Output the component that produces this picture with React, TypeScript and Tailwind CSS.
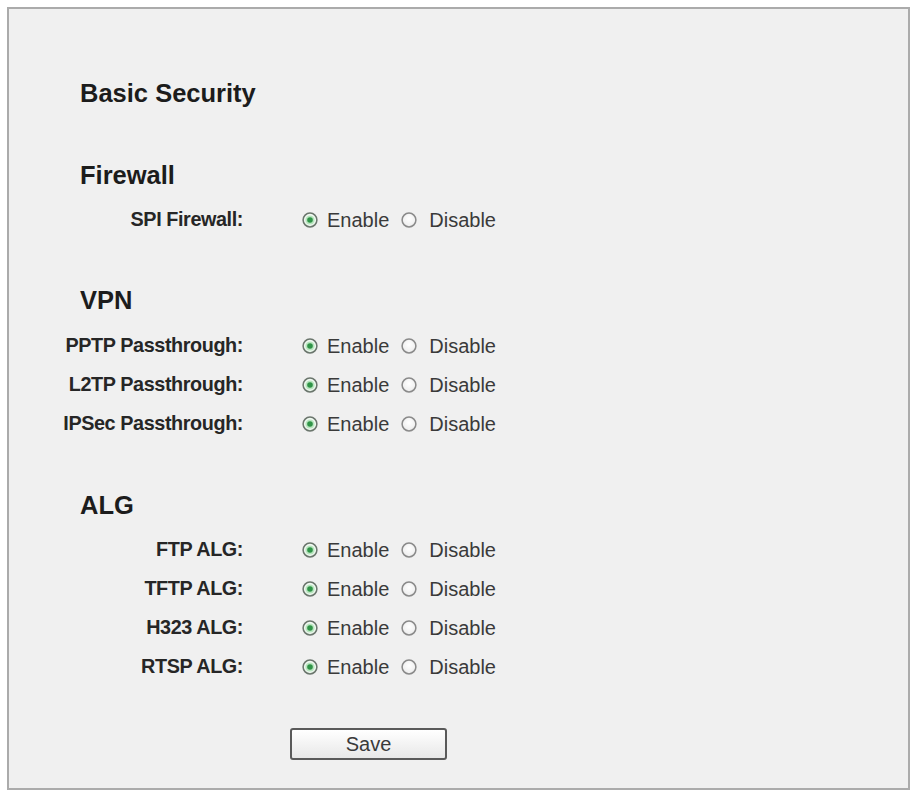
import React from "react";

const font = { fontFamily: '"Liberation Sans", Arial, sans-serif' };

function Radio({ checked }: { checked: boolean }) {
  return (
    <svg width="16" height="16" viewBox="0 0 16 16" className="shrink-0">
      <defs>
        <radialGradient id={checked ? "rg1" : "rg0"} cx="50%" cy="40%" r="60%">
          <stop offset="0%" stopColor="#ffffff" />
          <stop offset="100%" stopColor={checked ? "#e4f3e6" : "#ececec"} />
        </radialGradient>
      </defs>
      <circle cx="8" cy="8" r="6.9" fill={`url(#${checked ? "rg1" : "rg0"})`} stroke={checked ? "#6a756c" : "#8a8a8a"} strokeWidth="1.5" />
      {checked && (
        <>
          <circle cx="8" cy="8" r="4.6" fill="#b9e5bf" />
          <circle cx="8" cy="8" r="2.8" fill="#2f9447" />
        </>
      )}
    </svg>
  );
}

function Row({ label }: { label: string }) {
  return (
    <div className="flex h-[39px] items-center">
      <div className="w-[234px] text-right text-[19.8px] font-bold tracking-[-0.4px] text-[#262626]">{label}</div>
      <div className="ml-[59px] flex items-center text-[20px] text-[#3a3a3a]">
        <Radio checked />
        <span className="ml-[9px]">Enable</span>
        <span className="ml-[12px] flex items-center">
          <Radio checked={false} />
        </span>
        <span className="ml-[12px]">Disable</span>
      </div>
    </div>
  );
}

function Heading({ children, mt }: { children: React.ReactNode; mt: string }) {
  return (
    <div className={`flex h-[40px] items-center pl-[71px] text-[25.5px] font-bold text-[#1c1c1c] ${mt}`}>
      {children}
    </div>
  );
}

export default function App() {
  return (
    <div className="min-h-[792px] w-[915px] bg-white pl-[7px] pt-[7px]" style={font}>
      <div className="flex h-[783px] w-[903px] flex-col border-2 border-[#ababab] bg-[#f0f0f0]">
        <Heading mt="mt-[64px]">Basic Security</Heading>
        <Heading mt="mt-[42px]">Firewall</Heading>
        <div className="mt-[5px]">
          <Row label="SPI Firewall:" />
        </div>
        <Heading mt="mt-[41px]">VPN</Heading>
        <div className="mt-[6px]">
          <Row label="PPTP Passthrough:" />
          <Row label="L2TP Passthrough:" />
          <Row label="IPSec Passthrough:" />
        </div>
        <Heading mt="mt-[42px]">ALG</Heading>
        <div className="mt-[5px]">
          <Row label="FTP ALG:" />
          <Row label="TFTP ALG:" />
          <Row label="H323 ALG:" />
          <Row label="RTSP ALG:" />
        </div>
        <div className="mt-[42px] pl-[281px]">
          <button className="flex h-[32px] w-[157px] items-center justify-center rounded-[3px] border-2 border-[#5a5a5a] bg-gradient-to-b from-[#ffffff] to-[#e8e8e8] text-[20px] text-[#3a3a3a]">
            Save
          </button>
        </div>
      </div>
    </div>
  );
}
